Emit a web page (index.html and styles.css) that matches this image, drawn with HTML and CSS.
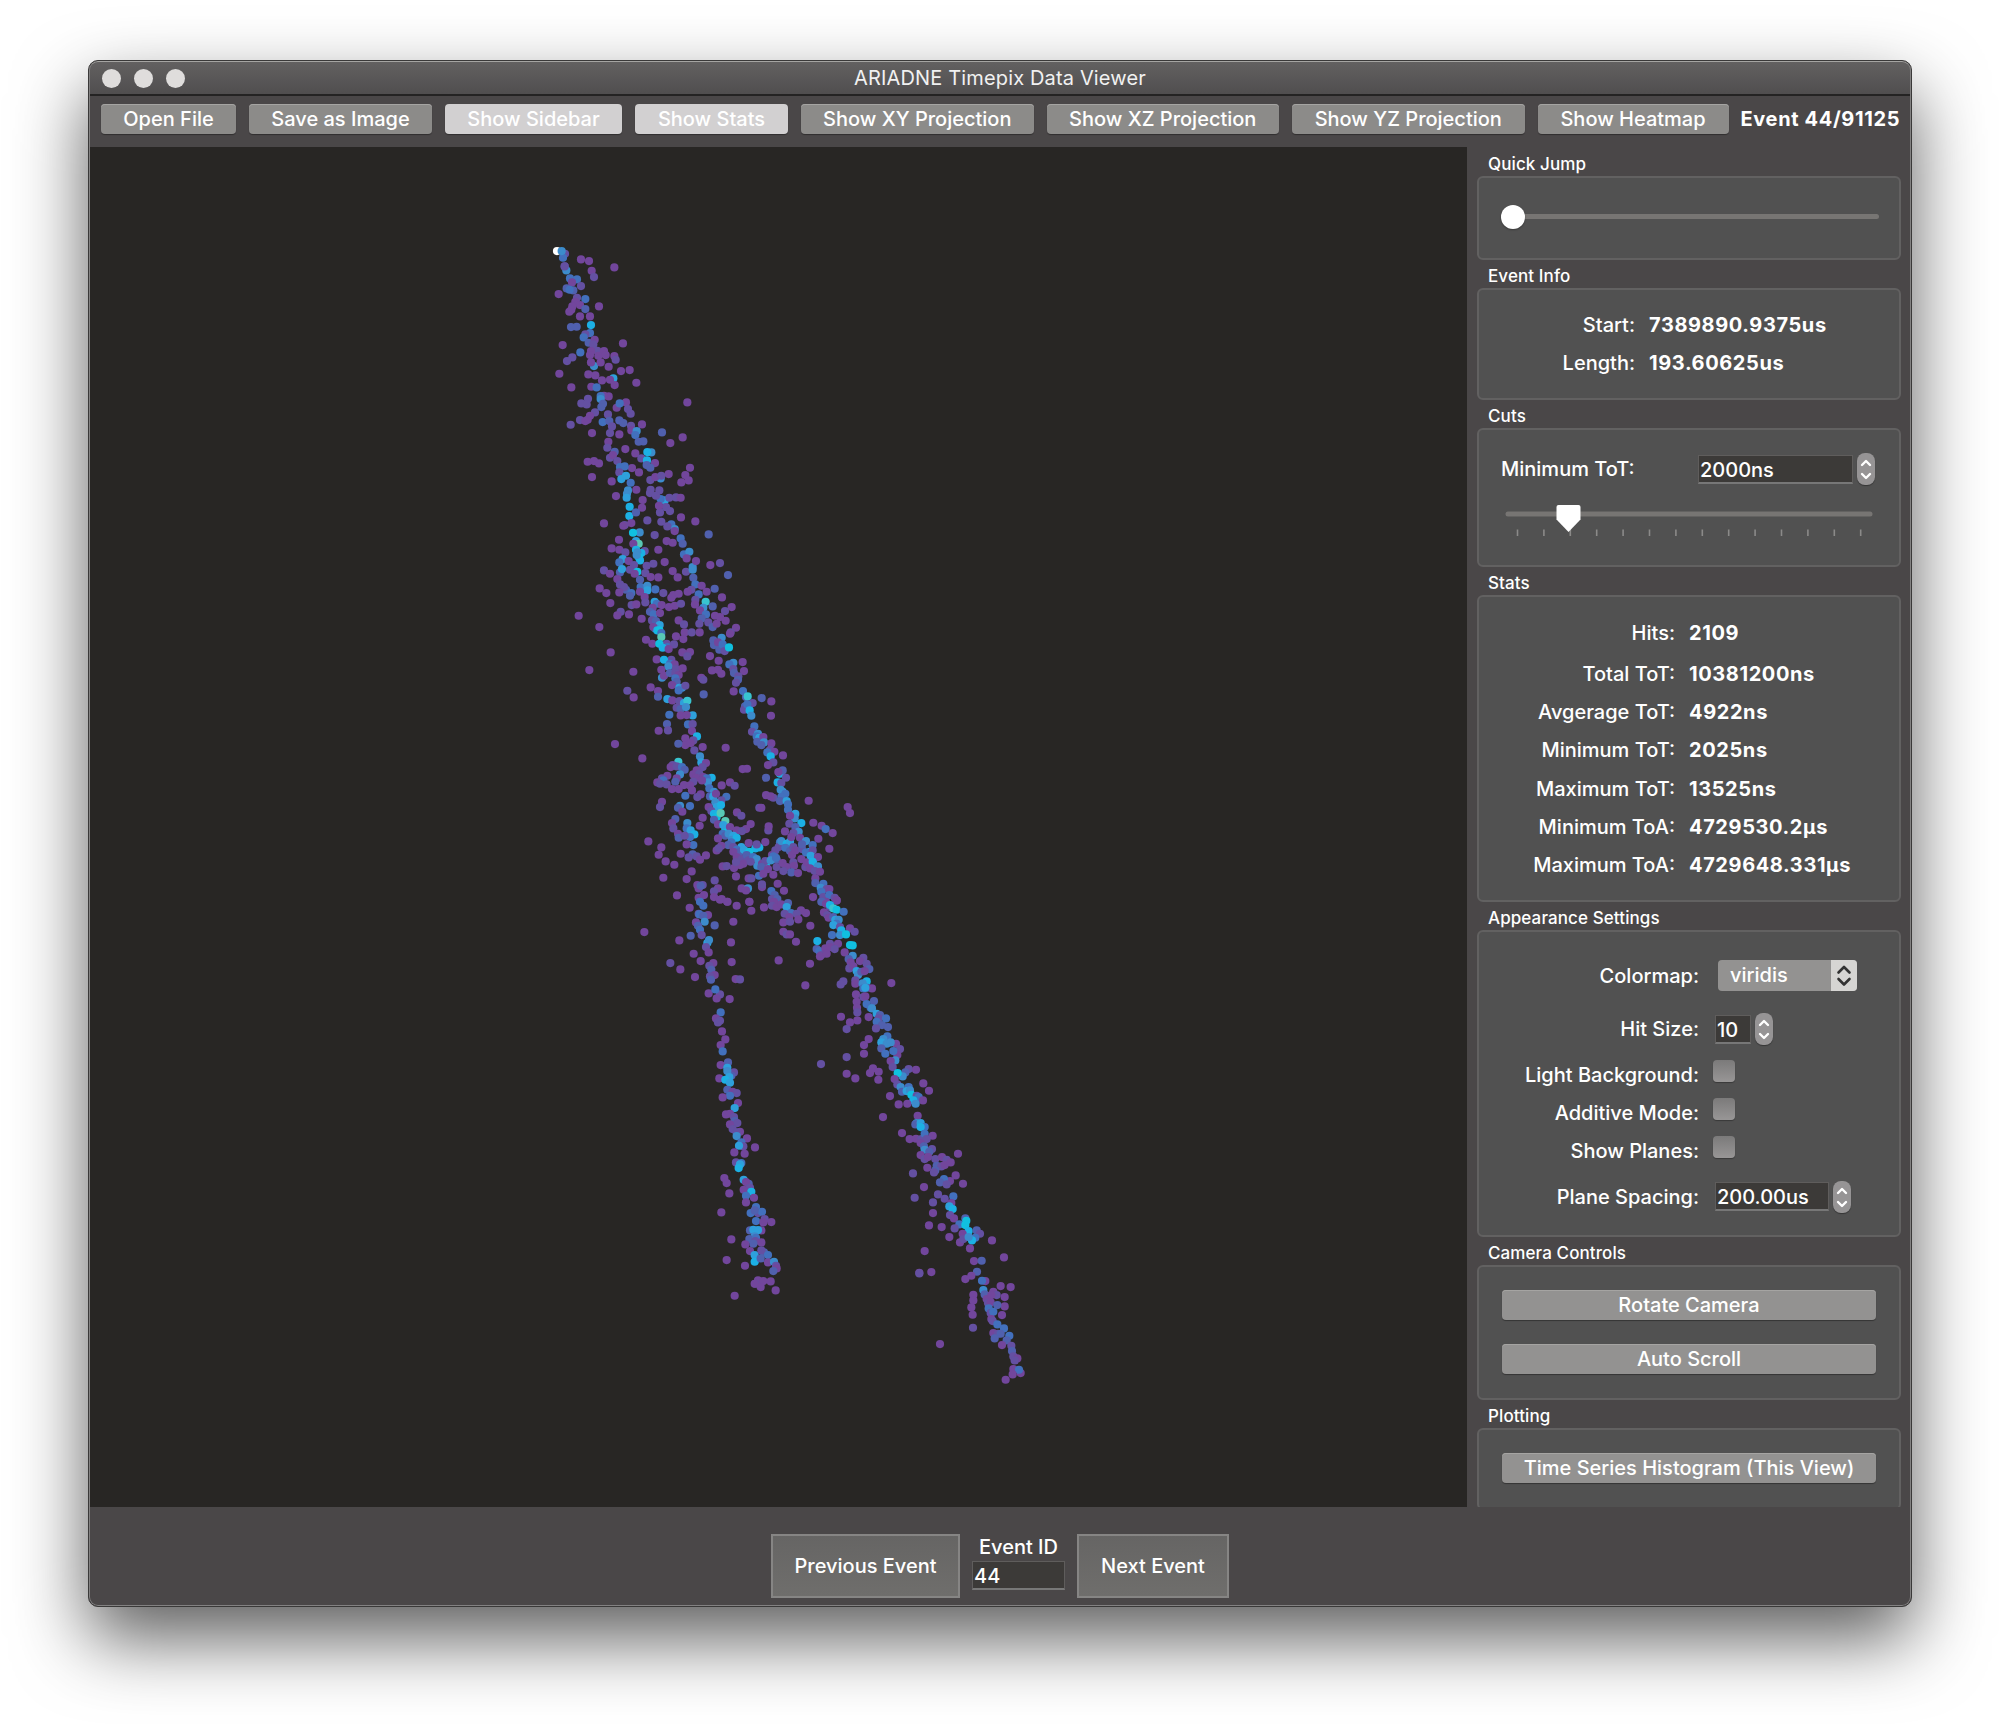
FILE: index.html
```html
<!DOCTYPE html>
<html lang="en">
<head>
<meta charset="utf-8">
<title>ARIADNE Timepix Data Viewer</title>
<link rel="stylesheet" href="styles.css">
</head>
<body>
<div class="window">
  <header class="titlebar">
    <div class="lights"><i></i><i></i><i></i></div>
    <h1>ARIADNE Timepix Data Viewer</h1>
  </header>
  <nav class="toolbar">
    <button class="btn w-open">Open File</button>
    <button class="btn w-save">Save as Image</button>
    <button class="btn on w-side">Show Sidebar</button>
    <button class="btn on w-stats">Show Stats</button>
    <button class="btn w-proj">Show XY Projection</button>
    <button class="btn w-proj">Show XZ Projection</button>
    <button class="btn w-proj">Show YZ Projection</button>
    <button class="btn w-heat">Show Heatmap</button>
    <strong class="counter">Event 44/91125</strong>
  </nav>
  <main class="body">
    <svg class="view" id="view" width="1378" height="1360" viewBox="89 147 1378 1360"></svg>
    <aside class="sidebar">
      <h2>Quick Jump</h2>
      <section class="box jump"><div class="track"><span class="knob"></span></div></section>
      <h2>Event Info</h2>
      <section class="box info">
        <div class="row"><span>Start:</span><b>7389890.9375us</b></div>
        <div class="row"><span>Length:</span><b>193.60625us</b></div>
      </section>
      <h2>Cuts</h2>
      <section class="box cuts">
        <div class="cutline">
          <span>Minimum ToT:</span>
          <div class="spin"><div class="field f-tot">2000ns</div>
          <svg class="step" width="18" height="32" viewBox="0 0 18 32"><path d="M5 12l4-4 4 4M5 21l4 4 4-4"/></svg></div>
        </div>
        <svg class="slider" width="370" height="36" viewBox="0 0 370 36">
          <rect x="1.5" y="7.5" width="367" height="5" rx="2.5" fill="#777573"/>
          <g id="ticks" stroke="#8b8a89" stroke-width="1.6"></g>
          <path d="M54.500 1h20q2 0 2 2v12.500l-12 12.500-12-12.500v-12.500q0-2 2-2z" fill="#fff"/>
        </svg>
      </section>
      <h2>Stats</h2>
      <section class="box stats">
        <div class="row first"><span>Hits:</span><b>2109</b></div>
        <div class="row"><span>Total ToT:</span><b>10381200ns</b></div>
        <div class="row"><span>Avgerage ToT:</span><b>4922ns</b></div>
        <div class="row"><span>Minimum ToT:</span><b>2025ns</b></div>
        <div class="row"><span>Maximum ToT:</span><b>13525ns</b></div>
        <div class="row"><span>Minimum ToA:</span><b>4729530.2µs</b></div>
        <div class="row"><span>Maximum ToA:</span><b>4729648.331µs</b></div>
      </section>
      <h2>Appearance Settings</h2>
      <section class="box look">
        <div class="row r-map"><span>Colormap:</span>
          <div class="select"><span>viridis</span><svg width="26" height="30" viewBox="0 0 26 30"><path d="M7.500 12l5.500-5.500 5.500 5.500M7.500 18.500l5.500 5.500 5.500-5.500"/></svg></div></div>
        <div class="row r-size"><span>Hit Size:</span>
          <div class="spin"><div class="field f-size">10</div><svg class="step" width="18" height="32" viewBox="0 0 18 32"><path d="M5 12l4-4 4 4M5 21l4 4 4-4"/></svg></div></div>
        <div class="row r-light"><span>Light Background:</span><i class="check"></i></div>
        <div class="row r-add"><span>Additive Mode:</span><i class="check"></i></div>
        <div class="row"><span>Show Planes:</span><i class="check"></i></div>
        <div class="row r-map"><span>Plane Spacing:</span>
          <div class="spin"><div class="field f-plane">200.00us</div><svg class="step" width="18" height="32" viewBox="0 0 18 32"><path d="M5 12l4-4 4 4M5 21l4 4 4-4"/></svg></div></div>
      </section>
      <h2>Camera Controls</h2>
      <section class="box camera">
        <button class="btn wide">Rotate Camera</button>
        <button class="btn wide">Auto Scroll</button>
      </section>
      <h2>Plotting</h2>
      <section class="box plotting"><button class="btn wide">Time Series Histogram (This View)</button></section>
    </aside>
  </main>
  <footer class="footer">
    <button class="big prev">Previous Event</button>
    <div class="eid"><label>Event ID</label><div class="field f-id">44</div></div>
    <button class="big next">Next Event</button>
  </footer>
</div>
<script src="hits.js"></script>
</body>
</html>
```
FILE: styles.css
```css
* { box-sizing: border-box; }
body {
  margin: 0;
  height: 1724px;
  padding: 60px 0 0 88px;
  overflow: hidden;
  background: #fff;
  color: #fff;
  font: 450 20px/1 Inter, "Liberation Sans", sans-serif;
}
h1, h2 { margin: 0; font-weight: 450; }
button { font: inherit; color: inherit; border: 0; padding: 0; white-space: nowrap; }

.window {
  position: relative;
  width: 1824px;
  height: 1547px;
  display: flex;
  flex-direction: column;
  border-radius: 10px;
  overflow: hidden;
  border: 1px solid #3a3939;
  background: #4a4748;
  box-shadow: 0 32px 72px rgba(0, 0, 0, .63);
}
.window::after {
  content: "";
  position: absolute;
  inset: 0;
  border: 1px solid #838282;
  border-top-color: #a5a4a2;
  border-radius: 9px;
  pointer-events: none;
}
.titlebar {
  height: 35px;
  flex: none;
  display: grid;
  grid-template-columns: 110px 1fr 110px;
  align-items: center;
  padding-top: 1px;
  background: linear-gradient(#636161, #504e4f);
  border-bottom: 2px solid #242323;
}
.titlebar h1 { text-align: center; font-size: 20px; font-weight: 400; letter-spacing: .15px; color: #f1f1f1; }
.lights { display: flex; gap: 13px; padding-left: 13px; }
.lights i { width: 19px; height: 19px; border-radius: 50%; background: #dfdddc; }

.toolbar {
  height: 51px;
  flex: none;
  display: flex;
  align-items: flex-start;
  gap: 13px;
  padding: 8px 0 0 12px;
}
.btn {
  height: 30px;
  border-radius: 4px;
  background: #8c8b89;
  box-shadow: inset 0 1px 0 #a5a4a2, 0 1px 1px rgba(0, 0, 0, .35);
}
.btn.on { background: #d2d0d1; box-shadow: 0 1px 1px rgba(0, 0, 0, .35); }
.w-open { width: 135px; }
.w-save { width: 183px; }
.w-side { width: 177px; }
.w-stats { width: 153px; }
.w-proj { width: 232.500px; }
.w-heat { width: 191px; }
.counter { line-height: 30px; font-weight: 700; letter-spacing: .65px; margin-left: -1px; white-space: nowrap; }

.body { height: 1360px; flex: none; display: flex; overflow: hidden; }
.view { flex: none; display: block; background: #282624; }
.sidebar { width: 444px; padding: 1px 10px 0; }
.sidebar h2 { height: 28px; padding: 4px 0 0 11px; font-size: 17px; line-height: 25px; letter-spacing: .1px; }
.box {
  width: 424px;
  border: 2px solid #626161;
  border-radius: 6px;
  background: #515151;
}
.jump { height: 84px; padding: 36px 20px 0 22px; }
.track { height: 5px; border-radius: 3px; background: #777573; display: flex; align-items: center; }
.knob { width: 24px; height: 24px; border-radius: 50%; background: #fff; flex: none; box-shadow: 0 1px 2px rgba(0, 0, 0, .3); }

.row { height: 38.3px; display: grid; align-items: center; grid-template-columns: 156px 1fr; column-gap: 14px; white-space: nowrap; }
.row > span { text-align: right; }
.row b { font-weight: 700; letter-spacing: .6px; }
.info { height: 112px; padding-top: 16px; }
.cuts { height: 139px; padding: 23px 0 0 22px; }
.cutline { height: 32px; width: 374px; display: flex; justify-content: space-between; align-items: center; }
.slider { display: block; margin: 19px 0 0 3px; }
.stats { height: 307px; padding-top: 16.400px; }
.stats .row { grid-template-columns: 196px 1fr; }
.stats .first { margin-bottom: 3px; }
.look { height: 307px; padding-top: 17px; }
.look .row { grid-template-columns: 220px 1fr; }
.look .r-map { height: 53px; }
.look .r-size { height: 54px; }
.look .r-light { height: 37px; }
.look .r-add { height: 39px; }
.spin { display: flex; align-items: center; gap: 4px; }
.look .spin { margin-left: 2px; }
.field {
  height: 29px;
  padding-left: 1px;
  line-height: 28px;
  border: 1px solid #5f5d5c;
  border-bottom: 2px solid #777;
  background: #3c3a38;
}
.f-tot { width: 155px; }
.f-size { width: 36px; }
.f-plane { width: 114px; }
.f-id { width: 93px; }
.step { border-radius: 8px; background: #969495; box-shadow: 0 1px 1px rgba(0, 0, 0, .35); }
.step path { fill: none; stroke: #fff; stroke-width: 2.400; stroke-linecap: round; stroke-linejoin: round; }
.select {
  width: 139px;
  height: 31px;
  margin-left: 5px;
  display: flex;
  justify-content: space-between;
  border-radius: 4px;
  overflow: hidden;
  background: #939291;
  line-height: 30px;
  padding-left: 12px;
}
.select svg { height: 31px; background: #d6d5d3; }
.select path { fill: none; stroke: #333; stroke-width: 2.600; stroke-linecap: round; stroke-linejoin: round; }
.check { width: 22px; height: 22px; margin-bottom: 8px; border-radius: 4px; background: linear-gradient(#7b7a7a, #989696); box-shadow: 0 1px 1px rgba(0, 0, 0, .3); }
.camera { height: 135px; padding: 23px 23px 0; display: flex; flex-direction: column; gap: 24px; }
.plotting { height: 82px; padding: 23px 23px 0; }
.wide { width: 374px; display: block; background: #939291; }

.footer { flex: 1; display: flex; justify-content: center; align-items: flex-start; gap: 12px; padding-top: 27px; }
.big { height: 64px; border: 2px solid #868584; background: linear-gradient(#666564, #6f6e6c); }
.prev { width: 189px; }
.next { width: 152px; }
.eid { display: flex; flex-direction: column; align-items: center; }
.eid label { height: 27px; line-height: 26px; }
```
FILE: hits.js
```js
// Hit colours, from low to high time over threshold.
const COLORS = { p: '#72469c', v: '#6450a2', b: '#5060ae', m: '#4270bd', l: '#3c8ccc', s: '#2ea0dc', c: '#1cb0e4', t: '#10c0e0', u: '#38c4d0', g: '#58c8b4', w: '#ffffff' };

// Each block: origin on the canvas, then "colour x,y x,y ..." runs in thirds of a pixel.
const BLOCKS = [
[530, 230, `
v 105,70 w 81,62 m 99,82 l 95,62 v 104,108 l 109,120 v 104,108 p 153,87 177,92 185,121 v 192,140 p 253,111 86,191 207,228
m 120,144 141,147 p 126,156 v 153,167 b 110,174 130,180 m 119,178 v 141,202 m 166,206 p 136,214 150,224 127,228 b 166,236 p 118,244 124,238 150,258 180,258
c 183,284 b 123,290 140,289 m 180,308 v 166,312 m 161,321 b 176,337 p 194,328 v 190,342 p 98,344 279,339
v 202,361 p 222,362 m 151,366 p 183,362 180,374 205,376 227,374 v 127,381 111,392 p 253,377 v 257,388 l 192,407 p 183,396 212,396 236,409 273,422 299,419 88,430
p 175,432 196,435 s 250,444 p 216,450 240,448 254,464 319,457 124,471 184,469 m 200,471 p 236,498 222,496 v 174,505 m 212,497 l 212,506 v 154,519 170,522 b 219,520
p 288,516 260,532 m 269,519 v 294,536 302,550 p 472,516 v 195,546 b 214,530 v 234,552 p 180,556 173,568 v 150,569 p 166,572 v 122,583 m 218,575 b 238,572 v 246,588 b 268,570 280,578 v 303,586 p 336,582 304,600
v 240,608 p 186,608 268,612 l 320,602 m 316,614 b 326,634 340,633 b 396,606 p 458,621 421,638 235,634 v 232,652 p 286,656 b 254,664 v 240,682 p 249,674 316,669 v 334,684
l 364,666 c 352,665 351,690 p 173,694 192,692 207,699 v 262,692 p 375,698 b 350,704 361,712 p 306,713 327,726 m 270,710 284,708 v 268,726 p 186,740 s 274,746 288,736 m 302,757 p 245,753 v 361,749 l 392,744 p 376,740 416,731 v 394,736
p 480,712 466,734 476,750 454,756 l 294,780 291,790 s 290,802 p 258,797 319,778 338,809 336,832 v 362,778 388,780 360,788 s 404,810 m 392,806 v 418,802 438,801 p 452,802 v 378,796
c 299,829 298,857 b 318,846 v 408,830 390,846 420,842 p 387,826 v 352,870 v 284,884 p 280,886 222,879 304,878 p 453,861 496,873 v 394,874 m 424,882 l 434,896 v 412,888 p 434,902
l 329,906 t 309,907 v 374,914 b 536,912 p 267,928 s 318,932 g 326,940 p 310,940 p 245,954 268,958 v 286,966 v 344,962 m 452,924 b 458,940 p 410,932 428,937 385,958
c 318,958 334,968 l 322,966 t 326,980 c 330,990 l 320,974 s 278,986 m 268,996 p 296,992 v 312,1004 350,1006 v 370,1000 p 404,995 m 462,972 l 478,964 p 470,984 l 488,1010 p 498,992 p 541,1004 v 570,998 b 594,1034
v 222,1020 p 240,1030 b 270,1026 p 262,1046 s 276,1016 v 300,1018 t 322,1024 p 314,1030 b 330,1048 v 346,1028 p 362,1040 385,1041 p 428,1022 443,1041 v 468,1024 l 488,1018 b 490,1042 m 496,1062
v 270,1062 b 288,1078 m 304,1088 v 282,1070 p 209,1074 229,1088 m 332,1070 l 352,1066 s 352,1080 m 376,1077 p 330,1084 344,1100 b 300,1096 p 268,1086 v 484,1078 p 515,1066 p 473,1084 m 506,1092 b 554,1075 p 530,1084 p 576,1101 v 496,1108
p 430,1094 446,1090 424,1102 v 400,1088
`],
[560, 600, `
p 151,8 v 215,14 p 229,12 v 256,6 s 284,4 m 290,10 p 278,22 p 305,14 p 327,20 344,16 v 363,10 p 405,12 p 56,46 v 182,34 p 172,45 p 207,42 245,55 b 270,34 m 281,42 p 300,38 v 276,60 b 288,62
u 437,4 l 430,22 b 458,18 p 420,30 p 515,20 v 495,32 m 438,42 b 425,54 p 465,46 v 445,66 p 480,50 497,61 v 418,70 b 458,80 p 470,70 p 118,80 p 356,60 v 372,72 p 374,96 348,108 p 419,96 p 528,82 v 512,96 p 510,100
s 299,74 l 286,84 p 280,80 c 292,90 t 298,90 m 304,98 g 304,110 p 258,118 277,130 p 370,116 v 320,130 m 322,140 t 298,130 c 308,142 v 342,132 p 326,146 v 395,96
b 460,120 l 485,112 b 462,134 p 474,126 b 478,148 m 488,132 v 494,152 t 507,141 p 152,156 p 367,156 390,155 v 382,168 p 450,167 476,181 p 290,177 v 334,178 c 312,178 m 330,190 p 344,192 l 325,198
p 88,209 220,214 v 202,271 p 221,291 272,261 p 304,208 v 348,206 p 368,204 l 306,232 p 312,226 b 330,218 v 346,218 p 356,224 m 346,234 b 350,244 p 336,254 s 358,262 l 366,262 v 376,256 m 356,270
p 548,185 l 520,187 m 508,192 v 520,206 b 522,218 p 456,210 474,208 484,220 p 552,212 v 535,228 b 534,238 v 528,247 p 521,273 p 424,232 v 430,238 b 431,282
p 294,272 b 294,289 s 322,296 p 337,300 v 358,302 s 372,308 u 382,301 v 350,322 b 362,326 l 378,320 p 362,345 s 398,345 p 380,344 m 328,343 b 321,371 m 384,372 v 398,371 v 324,390 p 296,391 p 396,392
m 549,272 b 558,290 u 563,288 v 578,308 b 555,318 v 552,328 m 562,312 c 569,330 l 574,346 b 605,293 p 634,303 633,346 m 583,378 v 576,394 l 594,400 m 590,408 s 598,412 p 610,410 b 592,424 l 612,426 b 604,434
c 411,408 v 400,420 p 376,414 376,434 b 355,430 v 403,450 p 392,428 428,440 p 165,431 247,474 497,442 p 634,429 v 630,448 p 643,454 669,465 m 622,456 c 632,468 v 640,486 p 624,494
l 420,468 s 424,486 p 438,488 v 428,500 u 355,484 v 338,494 p 332,500 v 350,498 m 366,500 b 374,508 l 360,522 p 322,526 v 306,534 m 310,540 p 292,546 v 300,550 p 350,534 b 346,544 v 320,552 p 336,566 356,566
p 410,510 400,522 v 418,520 p 430,530 408,532 v 400,544 c 455,532 m 440,534 l 444,546 p 426,540 p 372,554 390,555 p 396,570 422,582 v 412,590 m 376,586 p 485,555 510,546 v 524,556 p 548,506 561,505
b 618,532 c 660,520 b 668,510 p 655,515 v 678,532 c 653,546 v 664,548 s 668,574 l 662,568 m 676,580 v 640,592 p 618,584 632,588 m 664,590 b 660,602 s 680,602 m 684,612 p 746,601 v 598,622 p 604,622
p 863,620 870,638
m 448,564 l 462,574 b 450,588 s 460,588 p 468,580 m 499,589 v 484,600 l 466,606 s 470,620 c 483,614 p 446,620 v 454,632 c 462,640 t 470,650 g 482,638 b 462,658 p 474,672 g 496,662 t 496,688 s 490,674
p 306,604 v 300,620 l 360,616 b 354,622 m 390,617 p 367,634 p 428,652 419,676 b 346,656 p 336,668 v 340,684 l 382,668 m 380,684 s 392,690 p 354,700 b 356,712 c 403,702 m 390,710 v 374,706 m 400,734 p 380,732 b 398,762 v 410,768 p 438,765 420,778 362,760 v 386,771
p 265,723 304,741 296,763 317,783 343,793 310,832 395,813 380,836
p 531,636 v 544,646 p 572,671 p 530,690 558,686 v 546,692 p 510,680 m 488,700 b 496,706 p 474,714 l 506,700 s 520,706 l 516,718 c 530,712 m 514,726 b 504,734 v 520,740 p 484,736 470,750 v 476,744 s 544,740 m 530,748 b 538,756 p 520,754 530,770 v 546,776
s 552,748 c 586,744 598,741 t 568,754 p 566,728 v 590,732 p 616,725 v 625,690 p 626,678 b 560,764 v 566,780 p 550,790 m 580,770 l 590,776 l 592,796 v 572,784 p 540,794 522,803 488,798 v 500,797 528,785 t 618,796 p 606,790 v 616,782 b 604,800 m 597,826 p 528,828 566,834 v 574,834
p 636,764 v 646,750 m 640,768 b 650,778 m 660,726 v 656,740 l 664,722 c 680,730 s 690,724 m 676,742 b 690,752 v 700,740 p 696,764 p 706,750 v 726,746 p 624,806 610,820 640,823 v 650,800 p 668,788 680,800 v 700,786 p 702,796 724,776 v 736,800 b 694,816 p 714,818 v 670,812 l 632,780 m 648,772 p 740,786
s 706,640 l 704,654 m 684,628 p 690,646 v 688,670 c 724,668 b 706,680 l 716,694 p 675,693 v 700,698 p 760,667 785,676 m 797,686 p 818,698 775,715 p 694,710 p 720,712 l 738,722 b 726,732 m 758,734 p 808,745
c 750,754 m 738,756 v 758,750 s 752,766 760,778 p 774,770 l 760,794 c 758,784 l 774,798 p 750,804 v 764,812 p 780,814 p 766,834 b 766,848 m 790,850 l 782,862 v 800,866 m 784,874 p 808,866
p 412,854 v 428,854 p 416,864 b 422,856 v 464,840 p 474,864 v 462,873 p 462,890 432,884 485,896 502,904 p 416,892 351,885 p 545,864 l 564,864 p 558,870 606,860 653,850 v 606,852 m 634,872 b 644,884 p 672,871 v 636,896 b 652,896 p 568,904
p 759,890 v 790,890 m 808,884 b 784,904 v 824,892 p 830,900 p 798,904
`],
[620, 900, `
p 209,22 m 240,4 250,16 v 236,40 m 238,42 p 264,44 b 250,46 p 228,66 l 254,64 b 234,76 m 240,88 v 245,104 p 300,-2 322,4 350,16 388,4 394,31 p 432,21 340,64 b 284,75 212,106 p 178,120 73,95 333,126
s 262,128 l 267,119 v 258,140 p 266,156 221,160 242,182 v 151,188 p 181,207 335,185 225,230 p 280,188 v 268,196 b 274,208 p 284,224 v 270,228 b 273,238 p 347,236 v 360,237 p 266,279 v 300,282 p 290,294 m 286,267 p 329,296
m 302,336 p 288,354 v 294,366 300,361 p 306,393 316,417 302,434 m 308,453 p 302,494 b 324,486 s 322,502 v 342,516 b 334,526 l 322,512 p 298,534 s 328,530 c 316,538 s 330,547 b 322,568 p 338,574 v 350,578 m 330,586 p 308,591 p 354,608 s
344,623 p 318,642 330,640 v 342,650 b 344,662 v 352,668 p 330,672 v 338,686 p 360,694 v 350,696 l 350,707 p 381,714 405,741 m 364,726 v 370,738 s 357,736 p 343,756 374,760 v 348,786 m 364,788 s 360,792 c 356,803
p 313,833 320,848 328,879 s 371,838 b 386,850 p 378,845 v 390,862 p 371,868 c 394,874 m 378,886 p 402,892 378,906 304,936 m 408,920 v 414,938 m 426,934 392,938 b 404,930 m 408,962 v 434,956 p 430,966 454,965
b 390,990 p 424,990 s 400,988 414,989 l 404,1008 b 388,1016 m 408,1012 v 406,1022 p 424,1026 b 400,1030 p 376,1032 334,1017 320,1079 375,1096 p 390,1052 s 404,1064 b 432,1056 v 424,1050 m 444,1064 s 408,1076 c 404,1084 b 422,1074 p 444,1086 l 462,1084 v 468,1096 p 470,1104 b 460,1112
p 414,1140 v 406,1150 p 430,1142 452,1143 p 422,1160 467,1170 344,1186 404,1150
p 462,4 v 456,16 p 470,20 484,12 b 504,8 s 500,20 m 513,38 v 494,40 p 508,50 p 543,30 v 530,40 p 558,38 535,57 490,66 v 510,64 p 571,76 490,94 v 500,102 p 510,102 528,124 476,180 570,190 556,255
b 606,4 p 618,10 v 630,20 p 650,0 c 630,14 u 640,24 t 650,28 m 671,34 p 612,36 v 622,44 p 626,52 b 640,50 s 646,58 l 656,58 m 650,70 s 640,74 v 660,80 p 690,84 v 704,94 c 664,90 l 660,104 t 678,102 m 636,104 c 592,122 t 690,134 698,135
b 590,146 m 598,152 v 604,164 p 600,168 616,144 v 630,130 p 630,140 654,130 v 644,146 p 620,160 l 698,166 p 674,156 b 686,176 p 692,186 v 730,172 p 720,182 v 740,190 b 748,206 v 688,204 p 700,198 s 710,212 l 714,224 b 724,214 p 734,212
v 670,243 662,252 p 814,248 v 706,240 p 706,250 c 740,243 l 728,249 m 730,264 b 742,262 p 756,264 s 736,262 p 708,282 v 730,290 p 736,288 p 710,304 711,322 v 712,336 b 762,302 m 740,311 752,322 l 756,324 p 746,350 712,360 690,366 663,349 v 680,386
s 770,340 b 780,344 v 776,354 m 770,364 b 786,374 m 798,354 v 768,384 b 804,380 p 746,416 732,434 732,460 v 680,470 603,491 p 680,520 706,534
m 802,408 l 790,416 s 784,426 l 800,430 b 784,444 p 828,430 v 840,446 m 796,460 l 812,426 p 832,464 m 820,452 l 826,480 p 812,482 v 818,500 p 759,504 776,514 750,518 775,538 v 866,506 p 888,508 b 856,516 l 848,528 t 833,518
p 824,536 v 832,552 l 842,560 b 846,574 p 910,549 927,571 810,587 m 866,560 s 860,572 l 870,570 t 874,583 v 890,586 m 896,590 c 880,600 p 909,600 l 887,610 p 836,612 862,610 p 789,650 p 893,646
l 890,668 b 886,672 s 902,668 m 914,680 c 902,680 p 846,698 869,716 888,715 v 904,716 m 914,700 p 938,706 v 920,716 p 902,728 b 912,738 l 914,748 p 902,764 v 936,746 b 928,754 v 914,776 p 924,770 v 946,776 p 966,770 v 980,778 p 1014,760
p 922,802 b 950,796 v 964,798 p 974,794 992,786 b 946,810 v 942,816 879,819 p 1007,825 1029,850 912,860 v 884,892 p 990,842 m 972,836 b 960,846 v 980,852 954,882 974,895 m 1000,888 p 994,908 s 988,918 c 998,926 v 939,906 p 939,938
v 990,944 p 1002,954 m 1018,972 v 1004,984 p 927,975 965,980 988,1010 b 1036,954 t 1039,961 1036,974 c 1046,992 p 1028,1000 1020,1026 v 1030,1016 b 1070,990 v 1080,1000 m 1066,1012 c 1056,1020 l 1046,1010 p 1116,1020 1050,1044 914,1052 1152,1071
p 1062,1082 b 1085,1081 p 898,1117 v 898,1119 p 934,1115 b 1071,1114 p 1054,1126 1036,1136 p 1096,1142 m 1086,1141 p 1142,1157 1172,1160 l 1090,1169 b 1094,1182 p 1060,1183 1060,1200 1054,1221 1058,1243 v 1059,1282 p 1120,1174 v 1130,1184 p 1154,1190 1154,1218 1146,1244
p 1100,1196 v 1104,1208 p 1114,1184 1112,1206 b 1132,1214 m 1106,1224 v 1112,1238 m 1120,1234 p 1114,1256 v 1118,1262 m 1132,1272 p 1120,1298 v 1134,1300 m 1152,1284 b 1142,1300 1124,1314 m 1168,1306 b 1160,1320 p 1146,1334 v 1174,1336 b 1176,1352 v 1180,1368 p 1192,1374 v 1184,1380
p 1180,1406 1202,1418 m 1197,1408 p 1178,1422 1157,1438 960,1331
`]];

const NS = 'http://www.w3.org/2000/svg';
const view = document.getElementById('view');
for (const [ox, oy, text] of BLOCKS) {
  let fill = COLORS.p;
  for (const token of text.trim().split(/\s+/)) {
    if (COLORS[token]) { fill = COLORS[token]; continue; }
    const [x, y] = token.split(',').map(Number);
    const dot = document.createElementNS(NS, 'circle');
    dot.setAttribute('cx', ox + x / 3);
    dot.setAttribute('cy', oy + y / 3 + 0.4);
    dot.setAttribute('r', 4.1);
    dot.setAttribute('fill', fill);
    view.appendChild(dot);
  }
}

const ticks = document.getElementById('ticks');
for (let i = 0; i < 14; i++) {
  const x = 13.5 + i * 26.4;
  const line = document.createElementNS(NS, 'path');
  line.setAttribute('d', `M${x} 25.500v6.500`);
  ticks.appendChild(line);
}
```
